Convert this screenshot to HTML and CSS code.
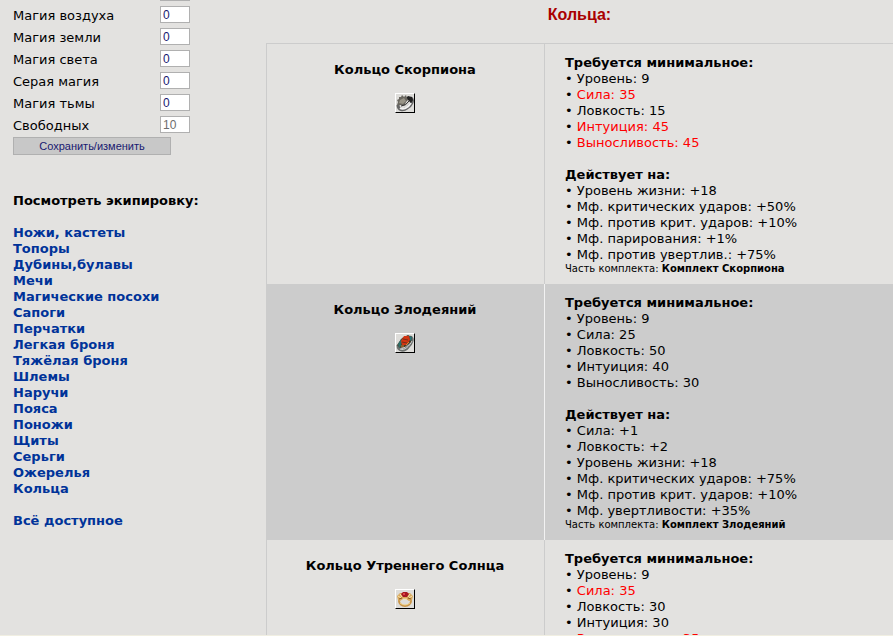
FILE: index.html
```html
<!DOCTYPE html>
<html lang="ru">
<head>
<meta charset="utf-8">
<title>Кольца</title>
<link rel="stylesheet" href="styles.css">
</head>
<body>
<div class="page">
  <aside class="sidebar">
    <form class="skills">
      <div class="skill"><input type="text" value="0" aria-label="Магия воды"></div>
      <div class="skill"><label for="air">Магия воздуха</label><input id="air" type="text" value="0"></div>
      <div class="skill"><label for="earth">Магия земли</label><input id="earth" type="text" value="0"></div>
      <div class="skill"><label for="light">Магия света</label><input id="light" type="text" value="0"></div>
      <div class="skill"><label for="grey">Серая магия</label><input id="grey" type="text" value="0"></div>
      <div class="skill"><label for="dark">Магия тьмы</label><input id="dark" type="text" value="0"></div>
      <div class="skill"><label for="free">Свободных</label><input id="free" type="text" value="10" disabled></div>
      <button class="save" type="button">Сохранить/изменить</button>
    </form>
    <nav class="menu">
      <h2>Посмотреть экипировку:</h2>
      <ul>
        <li><a href="#">Ножи, кастеты</a></li>
        <li><a href="#">Топоры</a></li>
        <li><a href="#">Дубины,булавы</a></li>
        <li><a href="#">Мечи</a></li>
        <li><a href="#">Магические посохи</a></li>
        <li><a href="#">Сапоги</a></li>
        <li><a href="#">Перчатки</a></li>
        <li><a href="#">Легкая броня</a></li>
        <li><a href="#">Тяжёлая броня</a></li>
        <li><a href="#">Шлемы</a></li>
        <li><a href="#">Наручи</a></li>
        <li><a href="#">Пояса</a></li>
        <li><a href="#">Поножи</a></li>
        <li><a href="#">Щиты</a></li>
        <li><a href="#">Серьги</a></li>
        <li><a href="#">Ожерелья</a></li>
        <li><a href="#">Кольца</a></li>
      </ul>
      <a href="#">Всё доступное</a>
    </nav>
  </aside>
  <main class="content">
    <h1>Кольца:</h1>
    <table class="items">
      <tr>
        <td class="name">
          <h3>Кольцо Скорпиона</h3>
          <svg class="icon" viewBox="0 0 18 18" aria-hidden="true">
            <path d="M2 11C2 16 7 17 11 14C16 11 18 6 15 4" fill="none" stroke="#666" stroke-width="3"/>
            <path d="M4 14C7 16 12 14 15 9" fill="none" stroke="#f2f2f2" stroke-width="2"/>
            <path d="M9 5L12 2L16 3L17 6L15 9L12 6Z" fill="#222"/>
            <path d="M1 11L2 8L1 6L3 5L3 3L5 3L6 1L8 3L10 1L11 4L12 6L10 8L9 11L5 11Z" fill="#69665f"/>
            <path d="M4 6L8 4L10 7L7 10L3 9Z" fill="#989487"/>
            <path d="M5 12Q10 12 13 7" fill="none" stroke="#292929"/>
          </svg>
        </td>
        <td class="stats">
          <h4>Требуется минимальное:</h4>
          <div>• Уровень: 9</div>
          <div>• <span class="lack">Сила: 35</span></div>
          <div>• Ловкость: 15</div>
          <div>• <span class="lack">Интуиция: 45</span></div>
          <div>• <span class="lack">Выносливость: 45</span></div>
          <h4 class="effects">Действует на:</h4>
          <div>• Уровень жизни: +18</div>
          <div>• Мф. критических ударов: +50%</div>
          <div>• Мф. против крит. ударов: +10%</div>
          <div>• Мф. парирования: +1%</div>
          <div>• Мф. против увертлив.: +75%</div>
          <p class="kit">Часть комплекта: <b>Комплект Скорпиона</b></p>
        </td>
      </tr>
      <tr class="alt">
        <td class="name">
          <h3>Кольцо Злодеяний</h3>
          <svg class="icon" viewBox="0 0 18 18" aria-hidden="true">
            <path d="M2 11C2 17 8 18 12 13C16 9 18 4 14 3" fill="none" stroke="#6d716f" stroke-width="3"/>
            <path d="M4 15C9 17 13 12 16 7" fill="none" stroke="#d6d8d7"/>
            <path d="M1 11L6 4L12 1L16 3L15 8L9 13L4 14Z" fill="#443a2b"/>
            <path d="M2 10L5 5L6 7L5 12L3 14Z" fill="#2d6e68"/>
            <path d="M13 2L16 3L15 7L14 6Z" fill="#28777a"/>
            <path d="M5 7L8 2L13 2L14 6L10 11L6 11Z" fill="#d23412"/>
            <path d="M7 5L12 6M6 8L11 9" fill="none" stroke="#75301b"/>
            <path d="M5 12L8 12M10 11L13 8" fill="none" stroke="#df822d"/>
          </svg>
        </td>
        <td class="stats">
          <h4>Требуется минимальное:</h4>
          <div>• Уровень: 9</div>
          <div>• Сила: 25</div>
          <div>• Ловкость: 50</div>
          <div>• Интуиция: 40</div>
          <div>• Выносливость: 30</div>
          <h4 class="effects">Действует на:</h4>
          <div>• Сила: +1</div>
          <div>• Ловкость: +2</div>
          <div>• Уровень жизни: +18</div>
          <div>• Мф. критических ударов: +75%</div>
          <div>• Мф. против крит. ударов: +10%</div>
          <div>• Мф. увертливости: +35%</div>
          <p class="kit">Часть комплекта: <b>Комплект Злодеяний</b></p>
        </td>
      </tr>
      <tr>
        <td class="name">
          <h3>Кольцо Утреннего Солнца</h3>
          <svg class="icon" viewBox="0 0 18 18" aria-hidden="true">
            <ellipse cx="9" cy="11" rx="6" ry="5" fill="none" stroke="#c9964a" stroke-width="2"/>
            <path d="M4 13Q9 17 14 13" fill="none" stroke="#f3d48c"/>
            <path d="M1 6L4 3L14 3L17 6L16 10L13 11L10 9L7 9L4 11L2 10Z" fill="#d9a95c"/>
            <path d="M2 6L5 8M4 4L6 7M14 4L12 7M16 6L13 8M7 9L11 9" fill="none" stroke="#fae5ad"/>
            <path d="M3 9L6 8M12 8L15 9" fill="none" stroke="#8c5820"/>
            <path d="M5 4L7 2L11 2L13 4L11 7L7 7Z" fill="#a81822"/>
            <path d="M7 3H9V5H7Z" fill="#df4647"/>
          </svg>
        </td>
        <td class="stats">
          <h4>Требуется минимальное:</h4>
          <div>• Уровень: 9</div>
          <div>• <span class="lack">Сила: 35</span></div>
          <div>• Ловкость: 30</div>
          <div>• Интуиция: 30</div>
          <div>• <span class="lack">Выносливость: 35</span></div>
        </td>
      </tr>
    </table>
  </main>
</div>
</body>
</html>
```
FILE: styles.css
```css
* {
  box-sizing: border-box;
}

body {
  margin: 0;
  height: 100vh;
  overflow: hidden;
  border-bottom: 1px solid #f1efe2;
  background: #e3e2e0;
  color: #000;
  font: 13px/16px Verdana, "DejaVu Sans", sans-serif;
}

h1, h2, h3, h4, p, ul {
  margin: 0;
  padding: 0;
  font-size: inherit;
}

ul {
  list-style: none;
}

.page {
  display: flex;
}

.sidebar {
  flex: 0 0 266px;
  padding-left: 13px;
}

/* The skill list continues above the top edge of the window. */
.skills {
  width: 177px;
  margin-top: -18px;
}

.skill {
  display: flex;
  height: 22px;
  padding-top: 2px;
}

.skill label {
  padding-top: 2px;
}

.skill input {
  width: 30px;
  height: 17px;
  margin-left: auto;
  padding: 0 2px;
  border: 1px solid #b0b0b0;
  background: #fff;
  color: #191970;
  font: 12px/15px "Liberation Sans", sans-serif;
}

.skill input:disabled {
  color: #6d6d6d;
}

.save {
  display: block;
  width: 158px;
  height: 18px;
  margin-top: 1px;
  padding: 0;
  border: 1px solid #b0b0b0;
  background: #c8c8c8;
  color: #191970;
  font: 11px/16px "Liberation Sans", sans-serif;
}

.menu {
  margin-top: 38px;
}

.menu ul {
  margin: 16px 0;
}

.menu a {
  color: #003399;
  font-weight: bold;
  text-decoration: none;
}

.content {
  flex: 1;
  min-width: 0;
}

h1 {
  padding: 5px 0 18px;
  color: #aa0000;
  font: bold 16px/20px "Liberation Sans", sans-serif;
  text-align: center;
}

.items {
  width: 100%;
  border-top: 1px solid #ccc;
  border-left: 1px solid #ccc;
  border-spacing: 0;
}

.items td {
  vertical-align: top;
}

.name {
  width: 277px;
  padding: 18px 1px 0 0;
  text-align: center;
}

.icon {
  display: block;
  width: 20px;
  height: 20px;
  margin: 15px auto 0;
  border: 1px solid;
  border-color: #fff #000 #000 #fff;
  background: #deddda;
}

.stats {
  padding: 11px 0 9px 20px;
  border-left: 1px solid #ccc;
}

.alt {
  background: #ccc;
}

.alt .stats {
  border-left-color: #f2f2f2;
}

.effects {
  margin-top: 16px;
}

.lack {
  color: #f00;
}

.kit {
  font-size: 10px;
  line-height: 12px;
}
```
